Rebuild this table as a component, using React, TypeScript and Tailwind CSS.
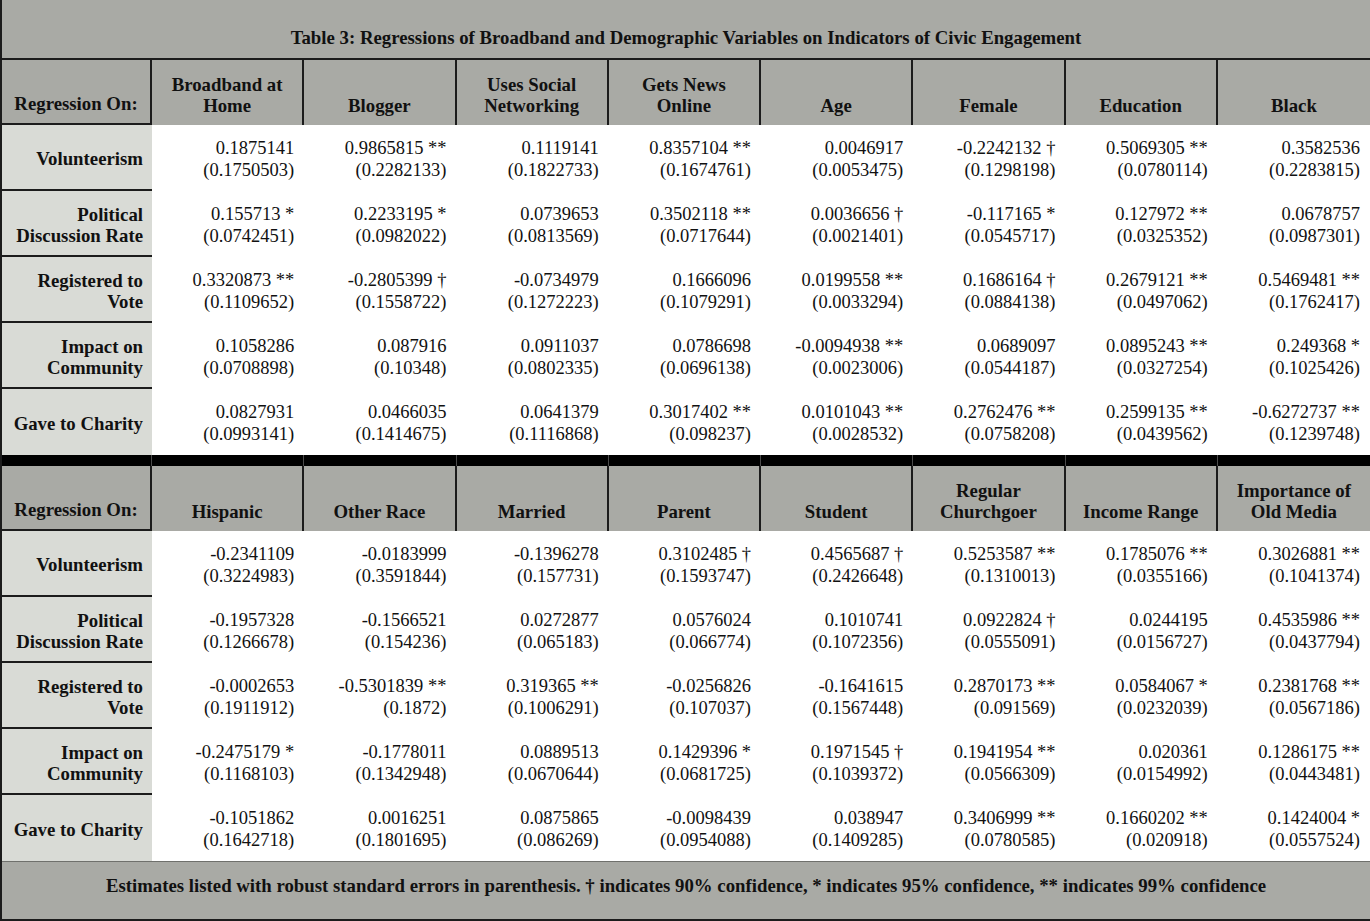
import type { ReactNode } from "react";

type Cell = [string, string];

const serif = "font-['Liberation_Serif','Times_New_Roman',serif]";

const blockOne = {
  heads: [
    "Broadband at Home",
    "Blogger",
    "Uses Social Networking",
    "Gets News Online",
    "Age",
    "Female",
    "Education",
    "Black",
  ],
  rows: [
    {
      label: ["Volunteerism"],
      cells: [
        ["0.1875141", "(0.1750503)"],
        ["0.9865815 **", "(0.2282133)"],
        ["0.1119141", "(0.1822733)"],
        ["0.8357104 **", "(0.1674761)"],
        ["0.0046917", "(0.0053475)"],
        ["-0.2242132 †", "(0.1298198)"],
        ["0.5069305 **", "(0.0780114)"],
        ["0.3582536", "(0.2283815)"],
      ] as Cell[],
    },
    {
      label: ["Political", "Discussion Rate"],
      cells: [
        ["0.155713 *", "(0.0742451)"],
        ["0.2233195 *", "(0.0982022)"],
        ["0.0739653", "(0.0813569)"],
        ["0.3502118 **", "(0.0717644)"],
        ["0.0036656 †", "(0.0021401)"],
        ["-0.117165 *", "(0.0545717)"],
        ["0.127972 **", "(0.0325352)"],
        ["0.0678757", "(0.0987301)"],
      ] as Cell[],
    },
    {
      label: ["Registered to", "Vote"],
      cells: [
        ["0.3320873 **", "(0.1109652)"],
        ["-0.2805399 †", "(0.1558722)"],
        ["-0.0734979", "(0.1272223)"],
        ["0.1666096", "(0.1079291)"],
        ["0.0199558 **", "(0.0033294)"],
        ["0.1686164 †", "(0.0884138)"],
        ["0.2679121 **", "(0.0497062)"],
        ["0.5469481 **", "(0.1762417)"],
      ] as Cell[],
    },
    {
      label: ["Impact on", "Community"],
      cells: [
        ["0.1058286", "(0.0708898)"],
        ["0.087916", "(0.10348)"],
        ["0.0911037", "(0.0802335)"],
        ["0.0786698", "(0.0696138)"],
        ["-0.0094938 **", "(0.0023006)"],
        ["0.0689097", "(0.0544187)"],
        ["0.0895243 **", "(0.0327254)"],
        ["0.249368 *", "(0.1025426)"],
      ] as Cell[],
    },
    {
      label: ["Gave to Charity"],
      cells: [
        ["0.0827931", "(0.0993141)"],
        ["0.0466035", "(0.1414675)"],
        ["0.0641379", "(0.1116868)"],
        ["0.3017402 **", "(0.098237)"],
        ["0.0101043 **", "(0.0028532)"],
        ["0.2762476 **", "(0.0758208)"],
        ["0.2599135 **", "(0.0439562)"],
        ["-0.6272737 **", "(0.1239748)"],
      ] as Cell[],
    },
  ],
};

const blockTwo = {
  heads: [
    "Hispanic",
    "Other Race",
    "Married",
    "Parent",
    "Student",
    "Regular Churchgoer",
    "Income Range",
    "Importance of Old Media",
  ],
  rows: [
    {
      label: ["Volunteerism"],
      cells: [
        ["-0.2341109", "(0.3224983)"],
        ["-0.0183999", "(0.3591844)"],
        ["-0.1396278", "(0.157731)"],
        ["0.3102485 †", "(0.1593747)"],
        ["0.4565687 †", "(0.2426648)"],
        ["0.5253587 **", "(0.1310013)"],
        ["0.1785076 **", "(0.0355166)"],
        ["0.3026881 **", "(0.1041374)"],
      ] as Cell[],
    },
    {
      label: ["Political", "Discussion Rate"],
      cells: [
        ["-0.1957328", "(0.1266678)"],
        ["-0.1566521", "(0.154236)"],
        ["0.0272877", "(0.065183)"],
        ["0.0576024", "(0.066774)"],
        ["0.1010741", "(0.1072356)"],
        ["0.0922824 †", "(0.0555091)"],
        ["0.0244195", "(0.0156727)"],
        ["0.4535986 **", "(0.0437794)"],
      ] as Cell[],
    },
    {
      label: ["Registered to", "Vote"],
      cells: [
        ["-0.0002653", "(0.1911912)"],
        ["-0.5301839 **", "(0.1872)"],
        ["0.319365 **", "(0.1006291)"],
        ["-0.0256826", "(0.107037)"],
        ["-0.1641615", "(0.1567448)"],
        ["0.2870173 **", "(0.091569)"],
        ["0.0584067 *", "(0.0232039)"],
        ["0.2381768 **", "(0.0567186)"],
      ] as Cell[],
    },
    {
      label: ["Impact on", "Community"],
      cells: [
        ["-0.2475179 *", "(0.1168103)"],
        ["-0.1778011", "(0.1342948)"],
        ["0.0889513", "(0.0670644)"],
        ["0.1429396 *", "(0.0681725)"],
        ["0.1971545 †", "(0.1039372)"],
        ["0.1941954 **", "(0.0566309)"],
        ["0.020361", "(0.0154992)"],
        ["0.1286175 **", "(0.0443481)"],
      ] as Cell[],
    },
    {
      label: ["Gave to Charity"],
      cells: [
        ["-0.1051862", "(0.1642718)"],
        ["0.0016251", "(0.1801695)"],
        ["0.0875865", "(0.086269)"],
        ["-0.0098439", "(0.0954088)"],
        ["0.038947", "(0.1409285)"],
        ["0.3406999 **", "(0.0780585)"],
        ["0.1660202 **", "(0.020918)"],
        ["0.1424004 *", "(0.0557524)"],
      ] as Cell[],
    },
  ],
};

const gridCols = "grid grid-cols-[150px_repeat(8,minmax(0,1fr))]";

function HeadCell({ children, first, last }: { children: ReactNode; first?: boolean; last?: boolean }) {
  return (
    <div
      className={
        "flex items-end justify-center pb-[9px] text-center text-[18.8px] font-bold leading-[21px] " +
        (first ? "border-b-2 border-r-2 border-[#1c1c1c] " : "") +
        (!first && !last ? "border-r-2 border-[#1c1c1c]" : "")
      }
    >
      {children}
    </div>
  );
}

function Block({ data }: { data: typeof blockOne }) {
  return (
    <>
      <div className={`${gridCols} h-[65px] bg-[#a9aaa5]`}>
        <HeadCell first>Regression On:</HeadCell>
        {data.heads.map((h, i) => (
          <HeadCell key={h} last={i === data.heads.length - 1}>
            <span className="block max-w-[128px]">{h}</span>
          </HeadCell>
        ))}
      </div>
      {data.rows.map((row, r) => (
        <div key={row.label.join(" ")} className={`${gridCols} h-[66px] bg-white`}>
          <div
            className={
              "flex flex-col items-end justify-center bg-[#d9dbd6] pr-[9px] pt-[3px] text-right text-[18.8px] font-bold leading-[21px] " +
              (r < data.rows.length - 1 ? "border-b-2 border-[#1c1c1c]" : "")
            }
          >
            {row.label.map((line) => (
              <span key={line} className="whitespace-nowrap">
                {line}
              </span>
            ))}
          </div>
          {row.cells.map(([est, se], c) => (
            <div
              key={c}
              className="flex flex-col items-end justify-center pr-[10px] pt-[2px] text-[18.5px] leading-[22px] text-[#111]"
            >
              <span className="whitespace-pre">{est}</span>
              <span className="whitespace-pre">{se}</span>
            </div>
          ))}
        </div>
      ))}
    </>
  );
}

export default function App() {
  return (
    <div className={`${serif} h-[921px] w-[1370px] overflow-hidden border-l-2 border-[#1c1c1c] bg-white text-[#111]`}>
      <div className="flex h-[60px] items-end justify-center border-b-2 border-[#1c1c1c] bg-[#a9aaa5] pb-[10px] text-[18.8px] font-bold leading-[21px]">
        Table 3: Regressions of Broadband and Demographic Variables on Indicators of Civic Engagement
      </div>
      <Block data={blockOne} />
      <div className={`${gridCols} h-[11px] bg-black`}>
        {Array.from({ length: 9 }).map((_, i) => (
          <div key={i} className={i < 8 ? "border-r border-[#4a4a4a]" : ""} />
        ))}
      </div>
      <Block data={blockTwo} />
      <div className="flex h-[60px] justify-center border-b-2 border-t border-b-[#1c1c1c] border-t-[#6f706c] bg-[#a9aaa5] pt-[13px] text-[18.8px] font-bold leading-[21px]">
        Estimates listed with robust standard errors in parenthesis. † indicates 90% confidence, * indicates 95% confidence, ** indicates 99% confidence
      </div>
    </div>
  );
}
